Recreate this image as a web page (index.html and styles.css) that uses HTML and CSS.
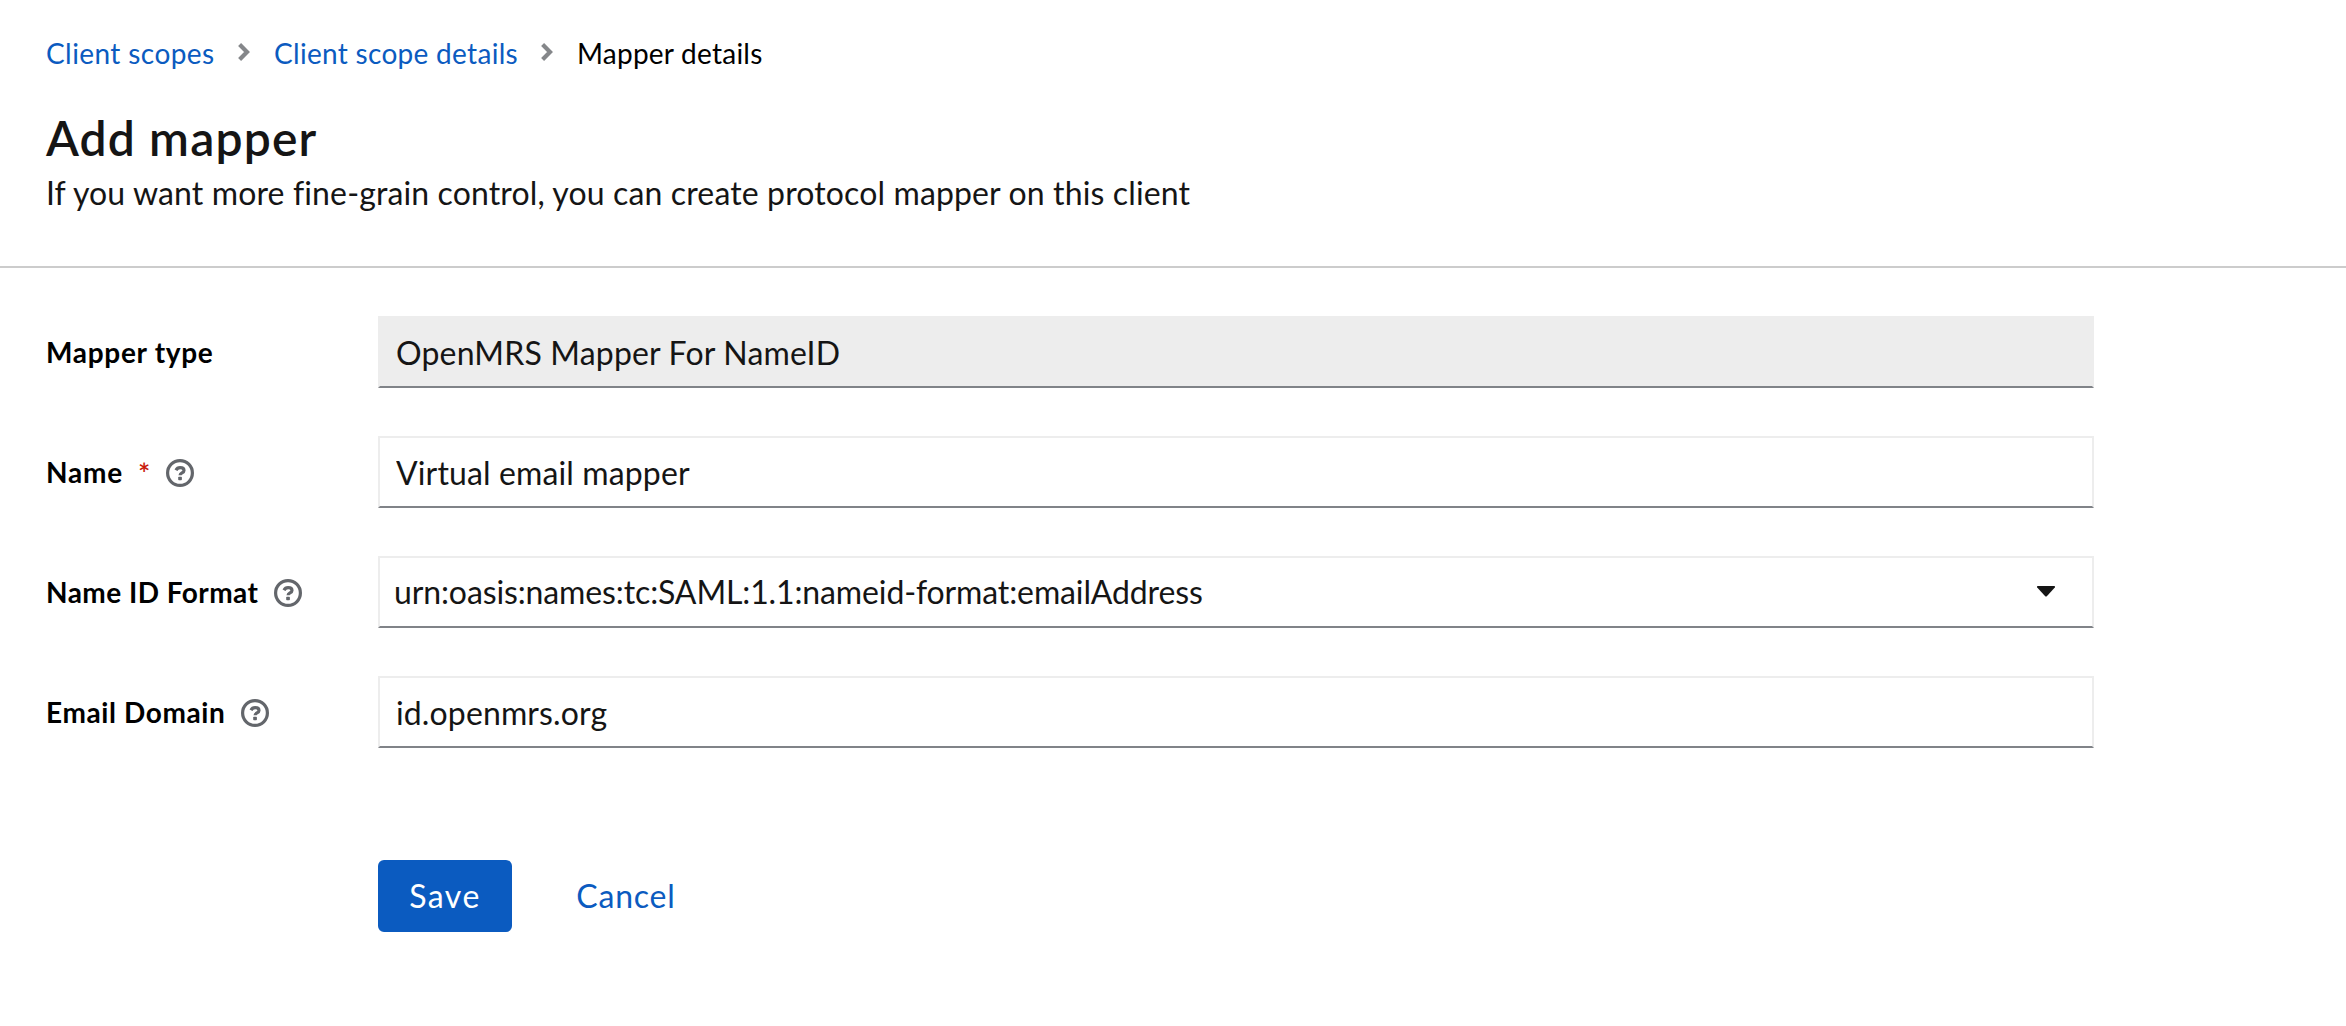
FILE: index.html
```html
<!DOCTYPE html>
<html lang="en">
<head>
<meta charset="utf-8">
<title>Add mapper</title>
<link rel="stylesheet" href="styles.css">
</head>
<body>
<svg class="sprite" aria-hidden="true">
  <symbol id="help" viewBox="0 0 28 28">
    <circle cx="14" cy="14" r="12.4" fill="none" stroke="currentColor" stroke-width="3.2"/>
    <path d="M10 11.2C10.8 9.5 12.1 8.7 14.1 8.7c2.3 0 3.9 1.1 3.9 2.8 0 2.5-3.9 2.4-3.9 4.7" fill="none" stroke="currentColor" stroke-width="3.2"/>
    <rect x="12.2" y="17.8" width="3.7" height="3.5" rx=".8" fill="currentColor"/>
  </symbol>
  <symbol id="angle" viewBox="0 0 12 18">
    <path d="M1.6 1.6l7.4 7.4-7.4 7.4" fill="none" stroke="currentColor" stroke-width="4.2"/>
  </symbol>
</svg>
<header class="page-header">
  <nav class="breadcrumb" aria-label="Breadcrumb">
    <a class="crumb crumb-scopes" href="#">Client scopes</a>
    <svg class="angle"><use href="#angle"/></svg>
    <a class="crumb crumb-scope" href="#">Client scope details</a>
    <svg class="angle"><use href="#angle"/></svg>
    <span class="crumb crumb-current">Mapper details</span>
  </nav>
  <h1 class="title">Add mapper</h1>
  <p class="subtitle">If you want more fine-grain control, you can create protocol mapper on this client</p>
</header>
<main>
  <form class="form">
    <div class="group">
      <label class="label label-type" for="type">Mapper type</label>
      <input class="control" id="type" type="text" value="OpenMRS Mapper For NameID" readonly>
    </div>
    <div class="group">
      <div class="label">
        <label class="label-name" for="name">Name</label>
        <span class="required">*</span>
        <svg class="help"><use href="#help"/></svg>
      </div>
      <input class="control" id="name" type="text" value="Virtual email mapper">
    </div>
    <div class="group">
      <div class="label">
        <span class="label-format">Name ID Format</span>
        <svg class="help"><use href="#help"/></svg>
      </div>
      <div class="control select" role="combobox">
        <span>urn:oasis:names:tc:SAML:1.1:nameid-format:emailAddress</span>
        <svg class="caret" viewBox="0 0 20 12"><path d="M1.5 0h17q1 .6.3 1.5L10.8 10.2q-.8.8-1.6 0L1.2 1.5Q.5.6 1.5 0z" fill="currentColor"/></svg>
      </div>
    </div>
    <div class="group">
      <div class="label">
        <label class="label-domain" for="domain">Email Domain</label>
        <svg class="help"><use href="#help"/></svg>
      </div>
      <input class="control" id="domain" type="text" value="id.openmrs.org">
    </div>
    <div class="actions">
      <button class="button primary" type="button">Save</button>
      <button class="button link" type="button">Cancel</button>
    </div>
  </form>
</main>
</body>
</html>
```
FILE: styles.css
```css
* { box-sizing: border-box; }

body {
  margin: 0;
  background: #fff;
  color: #151515;
  font: 400 32px/48px Lato, "Open Sans", sans-serif;
  font-variant-ligatures: none;
}

.sprite { display: none; }

.page-header {
  height: 268px;
  padding: 32px 46px 0;
  border-bottom: 2px solid #ccc;
}

.breadcrumb {
  display: flex;
  align-items: center;
  height: 42px;
  font-size: 28px;
  line-height: 42px;
}

.crumb { color: #0b5bc0; text-decoration: none; white-space: nowrap; }
.crumb-scopes { width: 169px; letter-spacing: .41px; }
.crumb-scope { width: 244px; letter-spacing: .3px; }
.crumb-current { color: #000; letter-spacing: .24px; }

.angle {
  width: 12px;
  height: 18px;
  margin: -2px 24px 0 23px;
  color: #85878a;
}

.title {
  margin: 33px 0 0;
  font-size: 48px;
  font-weight: 600;
  line-height: 62px;
  letter-spacing: 1.15px;
}

.subtitle { margin: 0; letter-spacing: .13px; }

.form {
  display: flex;
  flex-direction: column;
  gap: 48px;
  padding: 48px 252px 0 46px;
}

.group {
  display: grid;
  grid-template-columns: 332px 1fr;
  height: 72px;
}

.label {
  display: flex;
  align-items: center;
  height: 42px;
  margin-top: 15px;
  color: #000;
  font-size: 28px;
  font-weight: 700;
  line-height: 42px;
}

.label-type { letter-spacing: .7px; }
.label-name { letter-spacing: .8px; }
.label-format { letter-spacing: .46px; }
.label-domain { letter-spacing: .61px; }

.required {
  width: 12px;
  margin-left: 15px;
  padding-top: 1px;
  color: #c9190b;
  font-size: 29px;
  font-weight: 600;
}

.help {
  width: 28px;
  height: 28px;
  margin: 2px 0 0 16px;
  color: #63666b;
}

.control {
  width: 100%;
  height: 72px;
  margin: 0;
  padding: 10px 16px;
  border: 2px solid #ededed;
  border-bottom-color: #808388;
  border-radius: 0;
  outline: 0;
  background: #fff;
  color: #151515;
  font: inherit;
  letter-spacing: .13px;
}

#type { background: #ededed; letter-spacing: .17px; }

.select {
  display: flex;
  align-items: center;
  justify-content: space-between;
  padding: 10px 36px 10px 14px;
  letter-spacing: -.12px;
}

.caret { width: 20px; height: 12px; margin-top: 0; color: #151515; }

.actions {
  display: flex;
  gap: 32px;
  margin-top: 64px;
  padding-left: 332px;
}

.button {
  height: 72px;
  padding: 12px 0;
  border: 0;
  border-radius: 6px;
  font: inherit;
}

.primary { width: 134px; background: #0b5bc0; color: #fff; letter-spacing: 1.5px; }
.link { width: 164px; background: none; color: #0b5bc0; letter-spacing: .8px; }
```
